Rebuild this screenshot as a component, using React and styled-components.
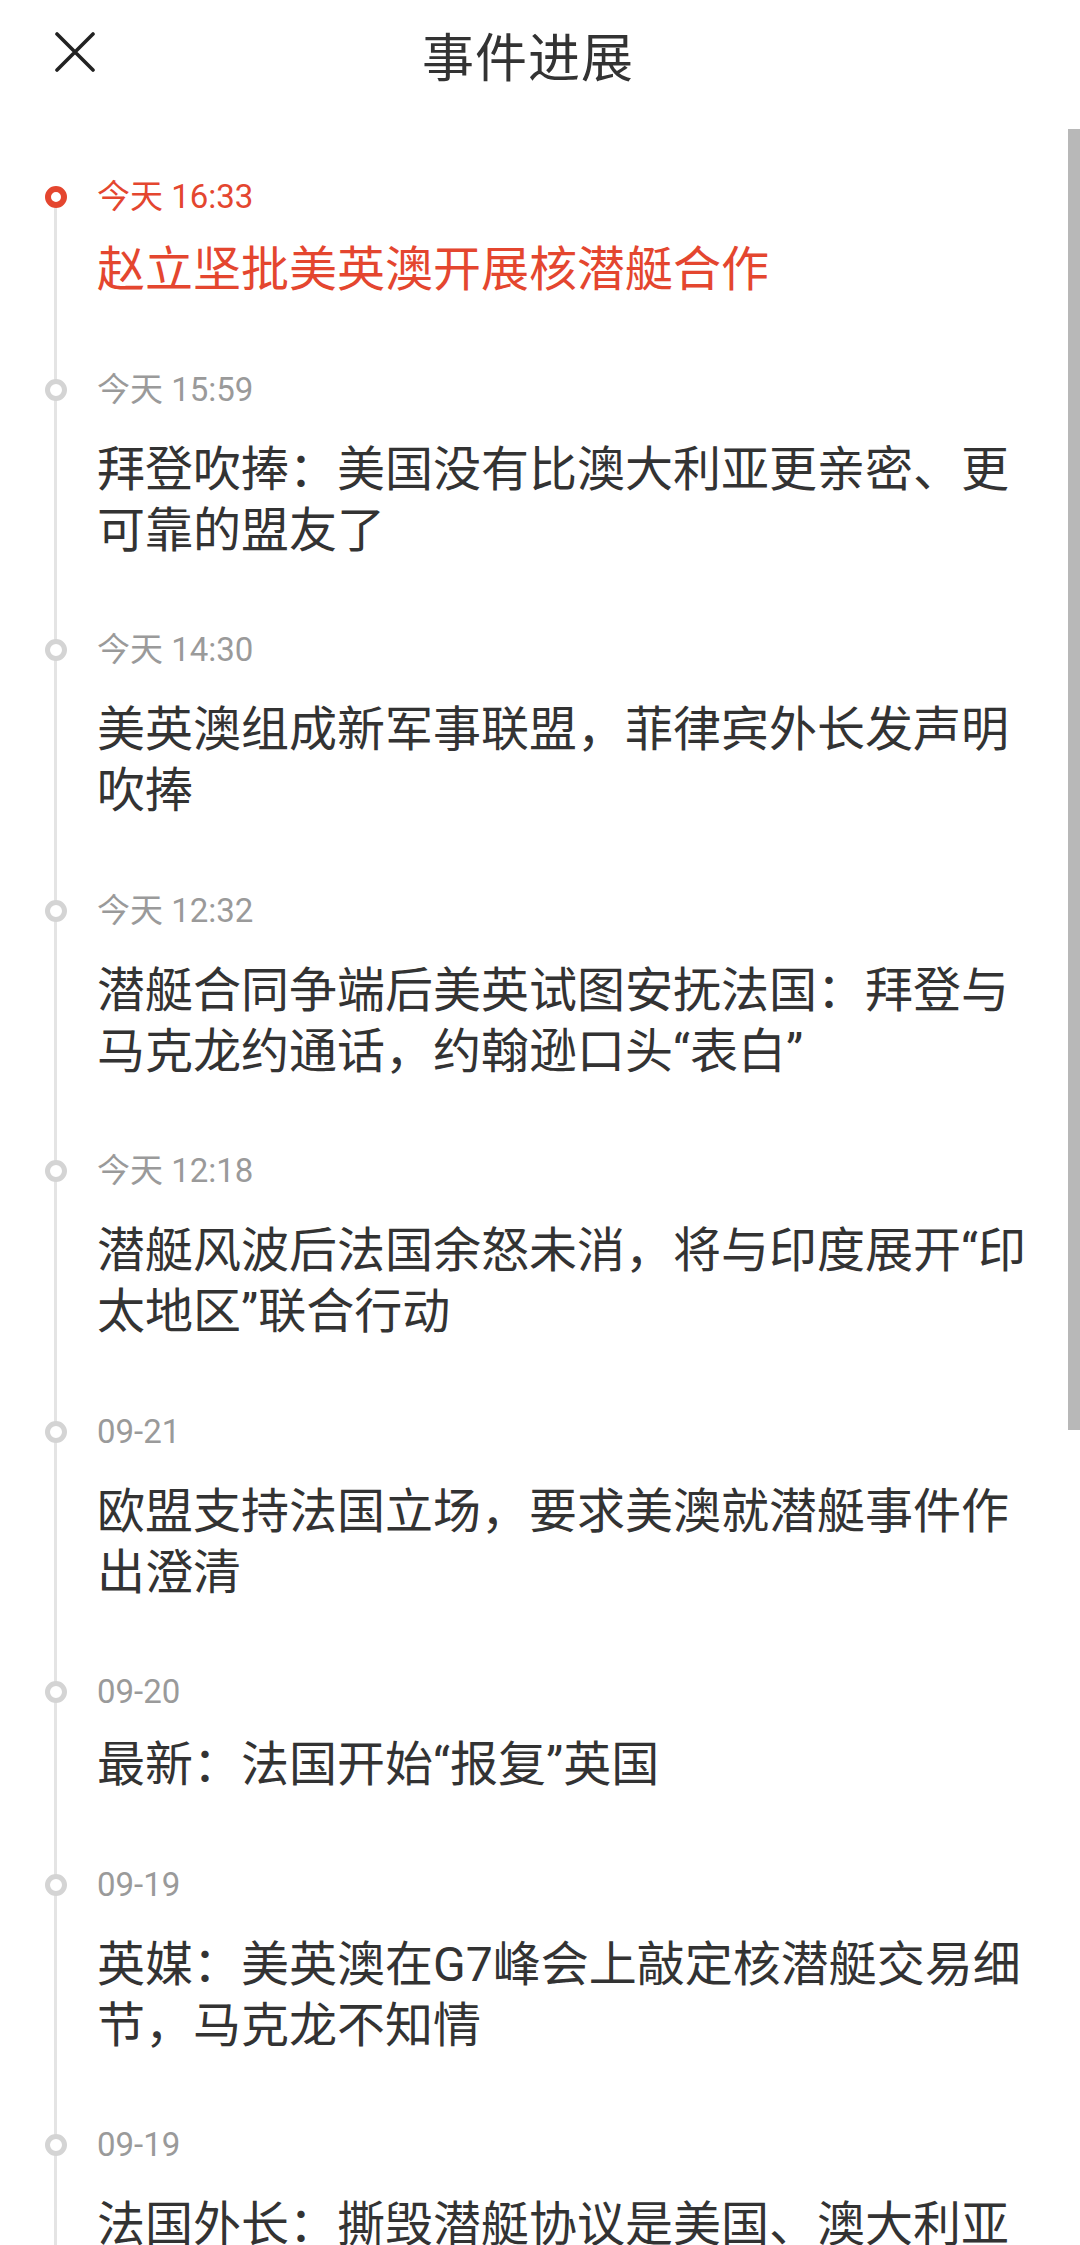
import React from "react";
import styled, { createGlobalStyle } from "styled-components";

const Global = createGlobalStyle`
  html, body { margin: 0; padding: 0; background: #ffffff; }
  body {
    font-family: Roboto, "Noto Sans CJK SC", "Noto Sans", sans-serif;
    -webkit-font-smoothing: antialiased;
  }
`;

const Page = styled.div`
  width: 1080px;
  min-height: 2245px;
  background: #fff;
  overflow: hidden;
`;

const Header = styled.header`
  display: grid;
  grid-template-columns: 1fr auto 1fr;
  align-items: center;
  height: 110px;
  padding-right: 24px;
`;

const CloseButton = styled.button`
  justify-self: start;
  margin-left: 55px;
  width: 40px;
  height: 40px;
  padding: 0;
  border: 0;
  background: transparent;
  display: flex;
  align-items: center;
  justify-content: center;
  margin-top: -6px;
`;

const Title = styled.h1`
  margin: 0;
  font-family: "Noto Sans CJK SC", sans-serif;
  font-weight: 400;
  font-size: 52px;
  line-height: 60px;
  color: #333;
  letter-spacing: 1px;
`;

const List = styled.ol`
  list-style: none;
  margin: 0;
  padding: 67px 0 0 0;
`;

const Item = styled.li`
  display: grid;
  grid-template-columns: 97px 940px;
`;

const Rail = styled.div`
  position: relative;
  padding-left: 45px;
  &::before {
    content: "";
    position: absolute;
    left: 54px;
    width: 3px;
    top: ${(p) => (p.$first ? "20px" : "0")};
    bottom: 0;
    background: #e4e4e4;
  }
`;

const Dot = styled.span`
  position: relative;
  z-index: 1;
  display: block;
  box-sizing: border-box;
  width: 22px;
  height: 22px;
  margin-top: 9px;
  border-radius: 50%;
  background: #fff;
  border: ${(p) => (p.$active ? "6px solid #e4462f" : "5px solid #d4d4d4")};
`;

const Body = styled.div`
  padding-bottom: 69.5px;
`;

const Time = styled.div`
  font-family: Roboto, "Noto Sans CJK SC", sans-serif;
  font-size: 33px;
  line-height: 40px;
  color: ${(p) => (p.$active ? "#e4462f" : "#9a9a9a")};
`;

const Headline = styled.div`
  margin-top: ${(p) => (p.$wrapped ? "29px" : "22px")};
  font-family: Roboto, "Noto Sans CJK SC", sans-serif;
  font-size: 48px;
  line-height: 61px;
  color: ${(p) => (p.$active ? "#e4462f" : "#333")};
`;

const Scrollbar = styled.div`
  position: fixed;
  right: 0;
  top: 129px;
  width: 12px;
  height: 1301px;
  background: #b8b8b8;
`;

const items = [
  { time: "今天 16:33", title: "赵立坚批美英澳开展核潜艇合作", active: true },
  { time: "今天 15:59", title: "拜登吹捧：美国没有比澳大利亚更亲密、更可靠的盟友了", wrapped: true },
  { time: "今天 14:30", title: "美英澳组成新军事联盟，菲律宾外长发声明吹捧", wrapped: true },
  { time: "今天 12:32", title: "潜艇合同争端后美英试图安抚法国：拜登与马克龙约通话，约翰逊口头“表白”", wrapped: true },
  { time: "今天 12:18", title: "潜艇风波后法国余怒未消，将与印度展开“印太地区”联合行动", wrapped: true },
  { time: "09-21", title: "欧盟支持法国立场，要求美澳就潜艇事件作出澄清", wrapped: true },
  { time: "09-20", title: "最新：法国开始“报复”英国" },
  { time: "09-19", title: "英媒：美英澳在G7峰会上敲定核潜艇交易细节，马克龙不知情", wrapped: true },
  { time: "09-19", title: "法国外长：撕毁潜艇协议是美国、澳大利亚和法国之间的危机", wrapped: true },
];

export default function App() {
  return (
    <Page>
      <Global />
      <Header>
        <CloseButton aria-label="关闭">
          <svg width="40" height="40" viewBox="0 0 40 40">
            <path
              d="M2 2 L38 38 M38 2 L2 38"
              stroke="#222"
              strokeWidth="3.6"
              strokeLinecap="round"
              fill="none"
            />
          </svg>
        </CloseButton>
        <Title>事件进展</Title>
        <span />
      </Header>
      <List>
        {items.map((it, i) => (
          <Item key={i}>
            <Rail $first={i === 0}>
              <Dot $active={it.active} />
            </Rail>
            <Body>
              <Time $active={it.active}>{it.time}</Time>
              <Headline $active={it.active} $wrapped={it.wrapped}>
                {it.title}
              </Headline>
            </Body>
          </Item>
        ))}
      </List>
      <Scrollbar />
    </Page>
  );
}
